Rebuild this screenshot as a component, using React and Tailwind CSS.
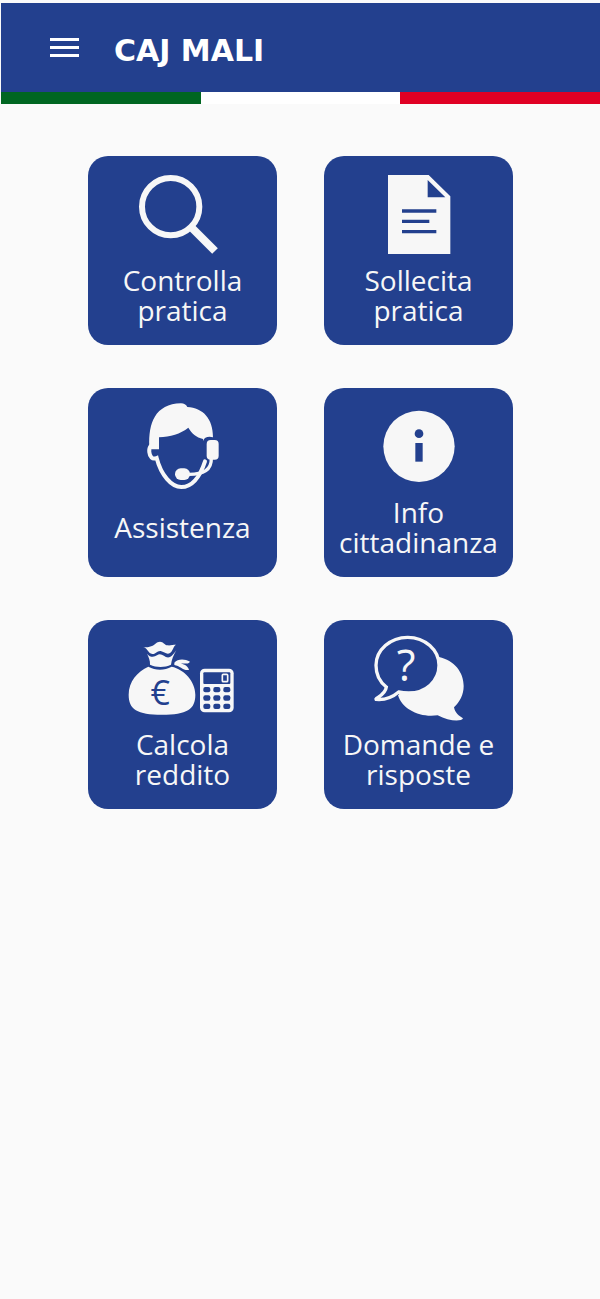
const iconClass = 'block w-full h-[110px]';

function SearchIcon() {
  return (
    <svg viewBox="25 18 567 330" className={iconClass} fill="none" stroke="currentColor" aria-hidden="true">
      <circle cx="273" cy="170" r="86" strokeWidth="18" />
      <path d="M334 231L406 303" strokeWidth="24" />
    </svg>
  );
}

function DocumentIcon() {
  return (
    <svg viewBox="27 18 567 330" className={iconClass} fill="currentColor" aria-hidden="true">
      <path
        fillRule="evenodd"
        d="M219 75H341L406 139V312H219ZM338 90V142H391ZM261 178V188H364V178ZM261 209V219H343V209ZM261 240V250H364V240Z"
      />
    </svg>
  );
}

function SupportIcon() {
  return (
    <svg viewBox="25 24 567 330" className={iconClass} fill="currentColor" aria-hidden="true">
      {/* Capelli */}
      <path d="M209 200C206 130 226 72 304 70C313 70 319 74 323 81C370 84 400 115 400 172C386 168 373 172 371 183L370 177C350 172 336 160 326 143C302 162 272 170 238 172V208H209Z" />
      {/* Orecchio e viso */}
      <path
        d="M213 198C206 206 208 226 216 233C220 237 226 236 231 234C244 285 275 321 305 321C338 321 362 287 376 244"
        fill="none"
        stroke="currentColor"
        strokeWidth="12"
        strokeLinecap="round"
      />
      {/* Cuffia e microfono */}
      <rect x="381" y="180" width="36" height="59" rx="12" />
      <path d="M395 234C396 270 372 283 328 283" fill="none" stroke="currentColor" strokeWidth="10" />
      <rect x="286" y="265" width="45" height="35" rx="17" />
    </svg>
  );
}

function InfoIcon() {
  return (
    <svg viewBox="27 24 567 330" className={iconClass} fill="currentColor" aria-hidden="true">
      <circle cx="312" cy="199" r="107" />
      <g className="fill-[#23408e]">
        <circle cx="312" cy="161" r="13" />
        <rect x="301" y="189" width="22" height="56" />
      </g>
    </svg>
  );
}

function IncomeIcon() {
  return (
    <svg viewBox="25 24 567 330" className={iconClass} fill="currentColor" aria-hidden="true">
      {/* Sacco */}
      <path d="M191 105C202 107 212 104 219 101C226 98 230 89 241 89C251 89 254 99 264 100C272 101 280 98 289 98C280 104 280 117 271 123C261 129 254 119 243 117C231 116 229 127 218 126C205 124 206 111 191 105Z" />
      <path d="M202 125C212 137 223 136 232 130C247 119 256 142 271 135C279 131 284 123 290 115C281 130 276 144 274 158C255 167 230 167 211 158C212 146 207 134 202 125Z" />
      <path d="M206 164C228 176 254 176 276 164C314 172 347 208 347 248C347 292 322 308 247 308C172 308 147 292 147 248C147 208 174 178 206 164Z" />
      <path d="M284 152C294 140 314 139 331 149C327 157 314 154 304 155C316 156 326 164 328 174C311 177 301 161 284 159Z" />
      <text x="242" y="278" textAnchor="middle" className="fill-[#23408e] font-['Open_Sans',sans-serif] text-[102px]">
        €
      </text>
      {/* Calcolatrice */}
      <rect x="361" y="170" width="101" height="131" rx="14" />
      <g className="fill-[#23408e]">
        <rect x="371" y="181" width="81" height="35" rx="3" />
        <rect x="371" y="225" width="21" height="16" rx="6" />
        <rect x="401" y="225" width="21" height="16" rx="6" />
        <rect x="431" y="225" width="21" height="16" rx="6" />
        <rect x="371" y="250" width="21" height="16" rx="6" />
        <rect x="401" y="250" width="21" height="16" rx="6" />
        <rect x="431" y="250" width="21" height="16" rx="6" />
        <rect x="371" y="275" width="21" height="16" rx="6" />
        <rect x="401" y="275" width="21" height="16" rx="6" />
        <rect x="431" y="275" width="21" height="16" rx="6" />
      </g>
      <rect x="428" y="187" width="16" height="22" rx="3" fill="none" stroke="currentColor" strokeWidth="5" />
    </svg>
  );
}

function FaqIcon() {
  return (
    <svg viewBox="27 24 567 330" className={iconClass} fill="currentColor" aria-hidden="true">
      <path d="M372 135C418 146 446 180 446 222C446 248 434 270 417 286C420 302 432 312 444 319C440 330 400 328 368 310C314 318 262 292 249 250Z" />
      <path
        className="fill-[#23408e]"
        d="M278 76C330 76 372 114 372 160C372 208 332 243 281 243C270 243 260 242 251 240C230 258 205 264 183 262C180 258 211 250 214 225C194 210 183 186 183 160C183 114 226 76 278 76Z"
        stroke="currentColor"
        strokeWidth="10"
      />
      <text x="273" y="207" textAnchor="middle" className="font-['Open_Sans',sans-serif] text-[130px]">
        ?
      </text>
    </svg>
  );
}

const voci = [
  { label: 'Controlla pratica', Icon: SearchIcon },
  { label: 'Sollecita pratica', Icon: DocumentIcon },
  { label: 'Assistenza', Icon: SupportIcon },
  { label: 'Info cittadinanza', Icon: InfoIcon },
  { label: 'Calcola reddito', Icon: IncomeIcon },
  { label: 'Domande e risposte', Icon: FaqIcon },
];

export default function App() {
  return (
    <div className="min-h-screen bg-[#fafafa] pt-[3px] pl-px font-['Open_Sans',sans-serif]">
      {/* Barra superiore */}
      <header>
        <div className="flex items-center h-[89px] bg-[#23408e] text-white pl-[49px]">
          <button type="button" aria-label="Apri menu" className="flex flex-col gap-[5px] w-[29px]">
            <span className="h-[3px] w-full bg-white" />
            <span className="h-[3px] w-full bg-white" />
            <span className="h-[3px] w-full bg-white" />
          </button>
          <h1 className="ml-[35px] pt-1.5 text-[30px] leading-9 font-bold font-['Verdana','DejaVu_Sans',sans-serif]">CAJ MALI</h1>
        </div>
        {/* Tricolore */}
        <div className="grid grid-cols-3 h-3">
          <div className="bg-[#006621]" />
          <div className="bg-white" />
          <div className="bg-[#e00024]" />
        </div>
      </header>

      {/* Menu principale */}
      <main className="grid grid-cols-2 gap-x-[47px] gap-y-[43px] px-[87px] pt-[52px]">
        {voci.map(({ label, Icon }) => (
          <button
            key={label}
            type="button"
            className="flex flex-col items-center aspect-square rounded-[20px] bg-[#23408e] text-[#f7f7f7]"
          >
            <Icon />
            <span className="flex items-center h-[58px] px-3 text-[28px] leading-[30px] text-center">{label}</span>
          </button>
        ))}
      </main>
    </div>
  );
}
